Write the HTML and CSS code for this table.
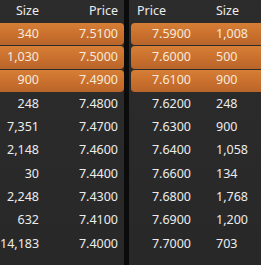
FILE: index.html
```html
<!DOCTYPE html>
<html>
<head>
<meta charset="utf-8">
<link rel="stylesheet" href="styles.css">
</head>
<body>
<div class="book">
  <div class="panel bids">
    <div class="row head"><span class="size">Size</span><span class="price">Price</span></div>
    <div class="row hot"><span class="size">340</span><span class="price">7.5100</span></div>
    <div class="row hot"><span class="size">1,030</span><span class="price">7.5000</span></div>
    <div class="row hot"><span class="size">900</span><span class="price">7.4900</span></div>
    <div class="row"><span class="size">248</span><span class="price">7.4800</span></div>
    <div class="row"><span class="size">7,351</span><span class="price">7.4700</span></div>
    <div class="row"><span class="size">2,148</span><span class="price">7.4600</span></div>
    <div class="row"><span class="size">30</span><span class="price">7.4400</span></div>
    <div class="row"><span class="size">2,248</span><span class="price">7.4300</span></div>
    <div class="row"><span class="size">632</span><span class="price">7.4100</span></div>
    <div class="row"><span class="size">14,183</span><span class="price">7.4000</span></div>
  </div>
  <div class="divider"></div>
  <div class="panel asks">
    <div class="row head"><span class="price">Price</span><span class="size">Size</span></div>
    <div class="row hot"><span class="price">7.5900</span><span class="size">1,008</span></div>
    <div class="row hot"><span class="price">7.6000</span><span class="size">500</span></div>
    <div class="row hot"><span class="price">7.6100</span><span class="size">900</span></div>
    <div class="row"><span class="price">7.6200</span><span class="size">248</span></div>
    <div class="row"><span class="price">7.6300</span><span class="size">900</span></div>
    <div class="row"><span class="price">7.6400</span><span class="size">1,058</span></div>
    <div class="row"><span class="price">7.6600</span><span class="size">134</span></div>
    <div class="row"><span class="price">7.6800</span><span class="size">1,768</span></div>
    <div class="row"><span class="price">7.6900</span><span class="size">1,200</span></div>
    <div class="row"><span class="price">7.7000</span><span class="size">703</span></div>
  </div>
</div>
</body>
</html>
```
FILE: styles.css
```css
html, body {
  margin: 0;
  padding: 0;
  background: #2a2a2a;
}
body {
  width: 261px;
  height: 265px;
  overflow: hidden;
  font-family: "Noto Sans", "Open Sans", sans-serif;
  font-size: 12.5px;
  color: #ececec;
}
.book {
  display: flex;
  height: 265px;
}
.panel {
  display: flex;
  flex-direction: column;
  gap: 1px;
  min-width: 0;
  background: linear-gradient(180deg, #2c2c2c 0%, #282828 100%);
}
.bids { width: 124px; flex: 0 0 124px; }
.asks { flex: 1 1 auto; padding-left: 2px; }
.divider {
  flex: 0 0 5px;
  width: 5px;
  background: #0b0b0b;
}
.row {
  height: 22.3px;
  display: grid;
  align-items: center;
  line-height: 1;
}
.row.head { height: 22px; }
.bids .row { grid-template-columns: 39px 79px; }
.bids .row span { text-align: right; }
.asks .row { grid-template-columns: 60px 1fr; }
.asks .price { text-align: right; }
.asks .size { padding-left: 25px; }
.asks .head .price { text-align: left; padding-left: 6px; }
.row.hot {
  background: linear-gradient(180deg, #d67e36 0%, #c96f2d 55%, #b8652b 100%);
  color: #f6e9dc;
}
.bids .row.hot { border-radius: 0 4px 4px 0; }
.asks .row.hot { border-radius: 4px 0 0 4px; }
```
